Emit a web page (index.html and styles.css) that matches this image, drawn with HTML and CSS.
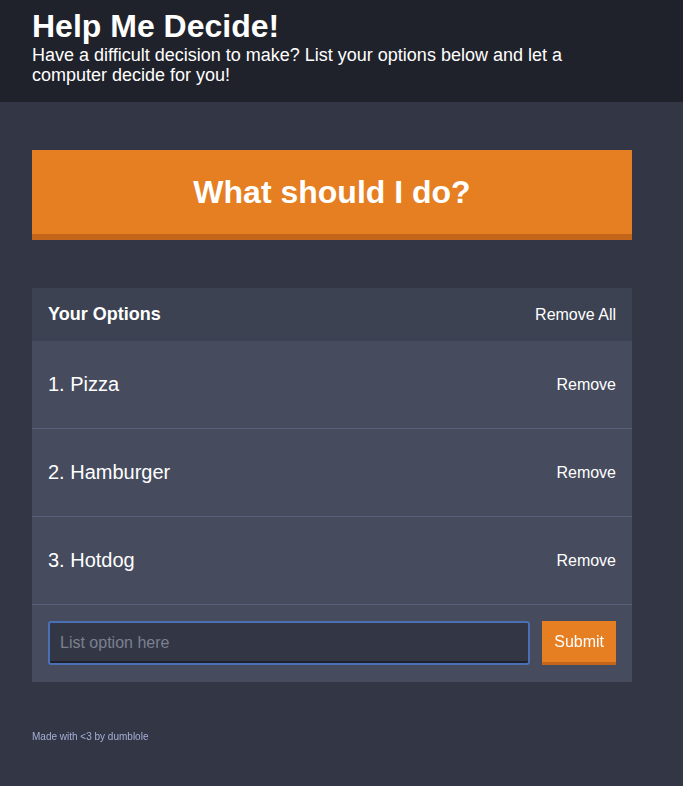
FILE: index.html
```html
<!DOCTYPE html>
<html lang="en">
<head>
<meta charset="utf-8">
<title>Help Me Decide!</title>
<link rel="stylesheet" href="styles.css">
</head>
<body>
<header class="header">
  <div class="container">
    <h1 class="header__title">Help Me Decide!</h1>
    <h2 class="header__subtitle">Have a difficult decision to make? List your options below and let a computer decide for you!</h2>
  </div>
</header>
<main class="container main">
  <button class="big-button">What should I do?</button>
  <section class="widget">
    <div class="widget-header">
      <h3 class="widget-header__title">Your Options</h3>
      <button class="link-button">Remove All</button>
    </div>
    <div class="option">
      <p class="option__text">1. Pizza</p>
      <button class="link-button">Remove</button>
    </div>
    <div class="option">
      <p class="option__text">2. Hamburger</p>
      <button class="link-button">Remove</button>
    </div>
    <div class="option">
      <p class="option__text">3. Hotdog</p>
      <button class="link-button">Remove</button>
    </div>
    <form class="add-option">
      <input class="add-option__input" type="text" name="option" placeholder="List option here" autofocus>
      <button class="button" type="button">Submit</button>
    </form>
  </section>
</main>
<footer class="container footer">Made with &lt;3 by dumblole</footer>
</body>
</html>
```
FILE: styles.css
```css
* { box-sizing: border-box; }
body {
  margin: 0;
  background: #333745;
  font-family: "Liberation Sans", Arial, sans-serif;
  color: #ffffff;
}
.container {
  width: 600px;
  margin: 0 32px;
}
.header {
  background: #20222b;
  padding: 8px 0 17px;
}
.header__title {
  margin: 0;
  font-size: 32px;
  line-height: 37px;
  font-weight: bold;
}
.header__subtitle {
  margin: 0;
  font-size: 18px;
  line-height: 20px;
  font-weight: normal;
}
.main {
  padding-top: 48px;
}
.big-button {
  display: block;
  width: 100%;
  height: 90px;
  border: none;
  border-bottom: 6px solid #c4661a;
  background: #e67e22;
  color: #ffffff;
  font-family: inherit;
  font-size: 32px;
  font-weight: bold;
  margin: 0 0 48px;
  padding: 0;
}
.widget {
  background: #464b5e;
}
.widget-header {
  display: flex;
  justify-content: space-between;
  align-items: center;
  background: #3c4251;
  height: 53px;
  padding: 0 16px;
}
.widget-header__title {
  margin: 0;
  font-size: 18px;
  font-weight: bold;
}
.link-button {
  background: none;
  border: none;
  padding: 0;
  color: #ffffff;
  font-family: inherit;
  font-size: 16px;
}
.option {
  display: flex;
  justify-content: space-between;
  align-items: center;
  height: 88px;
  padding: 0 16px;
  border-bottom: 1px solid #596079;
}
.option__text {
  margin: 0;
  font-size: 20px;
}
.add-option {
  display: flex;
  gap: 12px;
  padding: 16px 16px 17px;
}
.add-option__input {
  flex: 1;
  height: 44px;
  background: #333745;
  border: 2px solid #4a6fb4;
  border-radius: 3px;
  box-shadow: inset 0 -2px 0 #20222b;
  color: #ffffff;
  caret-color: #ffffff;
  font-family: inherit;
  font-size: 16px;
  padding: 0 10px;
  outline: none;
}
.add-option__input::placeholder {
  color: #7c8090;
}
.button {
  height: 44px;
  background: #e67e22;
  border: none;
  border-bottom: 3px solid #c4661a;
  color: #ffffff;
  font-family: inherit;
  font-size: 16px;
  padding: 0 12px;
}
.footer {
  padding-top: 49px;
  font-size: 10px;
  color: #a5afd7;
}
```
